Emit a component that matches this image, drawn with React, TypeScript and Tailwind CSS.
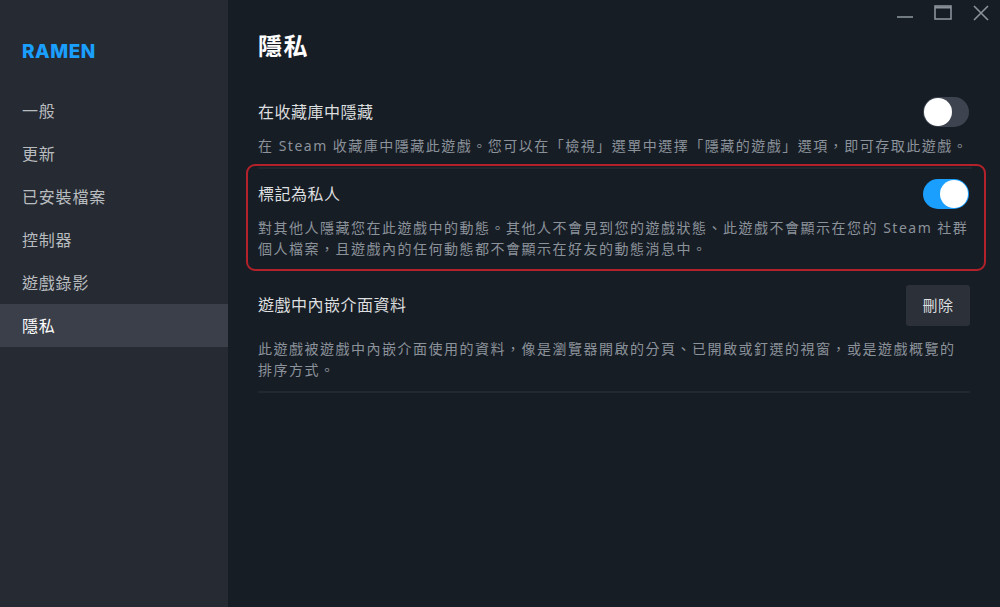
import React from "react";

const cjk = { fontFamily: '"Noto Sans", "Noto Sans CJK TC", sans-serif' };

const navItems = ["一般", "更新", "已安裝檔案", "控制器", "遊戲錄影", "隱私"];

function Toggle({ on }: { on: boolean }) {
    return (
        <div
            className={`w-[46px] h-[30px] rounded-full flex items-center px-[1px] ${
                on ? "bg-[#1a9fff] justify-end" : "bg-[#3d4450] justify-start"
            }`}
        >
            <div className="w-[28px] h-[28px] rounded-full bg-white" />
        </div>
    );
}

function WindowControls() {
    return (
        <div className="flex items-center justify-end gap-[20px] pr-[10px] h-[26px]">
            <svg width="18" height="18" viewBox="0 0 18 18">
                <line x1="1" y1="13" x2="17" y2="13" stroke="#8b929a" strokeWidth="1.6" />
            </svg>
            <svg width="18" height="18" viewBox="0 0 18 18">
                <rect x="1" y="2" width="16" height="13" fill="none" stroke="#8b929a" strokeWidth="1.6" />
                <line x1="1" y1="3.5" x2="17" y2="3.5" stroke="#8b929a" strokeWidth="2" />
            </svg>
            <svg width="18" height="18" viewBox="0 0 18 18">
                <path d="M2 2 L16 16 M16 2 L2 16" stroke="#8b929a" strokeWidth="1.6" />
            </svg>
        </div>
    );
}

export default function App() {
    return (
        <div className="w-[1000px] h-[607px] flex overflow-hidden bg-[#171d25]" style={cjk}>
            <aside className="w-[228px] shrink-0 bg-[#262a33] flex flex-col">
                <div
                    className="pl-[22px] pt-[38px] h-[89px] text-[19px] font-extrabold tracking-[0.5px] text-[#1a9fff]"
                    style={{ fontFamily: 'Inter, "Noto Sans", sans-serif' }}
                >
                    RAMEN
                </div>
                {navItems.map((item) => (
                    <div
                        key={item}
                        className={`h-[43px] flex items-center pl-[22px] text-[16px] tracking-[0.8px] ${
                            item === "隱私" ? "bg-[#3b3f4a] text-white" : "text-[#b8bcbf]"
                        }`}
                    >
                        {item}
                    </div>
                ))}
            </aside>

            <main className="flex-1 flex flex-col">
                <WindowControls />
                <div className="pl-[30px] pr-[28px]">
                    <h1 className="text-[24px] leading-[32px] mt-[4px] font-bold tracking-[1.5px] text-white">
                        隱私
                    </h1>

                    <section className="mt-[25px] pt-[10px] pb-[11px]">
                        <div className="flex items-center justify-between h-[30px]">
                            <span className="text-[16px] tracking-[0.5px] text-[#dcdedf]">在收藏庫中隱藏</span>
                            <div className="mr-[3px]">
                                <Toggle on={false} />
                            </div>
                        </div>
                        <p className="mt-[8px] text-[14px] leading-[21px] tracking-[1.5px] text-[#8b929a]">
                            在 Steam 收藏庫中隱藏此遊戲。您可以在「檢視」選單中選擇「隱藏的遊戲」選項，即可存取此遊戲。
                        </p>
                    </section>

                    <section className="relative border-t-2 border-[#232830] pt-[10px] pb-[16px]">
                        <div className="absolute left-[-12px] right-[-14px] top-[-5px] bottom-[4px] border-2 border-[#b3222a] rounded-[9px] pointer-events-none" />
                        <div className="flex items-center justify-between h-[30px]">
                            <span className="text-[16px] tracking-[0.5px] text-[#dcdedf]">標記為私人</span>
                            <div className="mr-[3px]">
                                <Toggle on={true} />
                            </div>
                        </div>
                        <p className="mt-[8px] text-[14px] leading-[21px] tracking-[1.5px] text-[#8b929a]">
                            對其他人隱藏您在此遊戲中的動態。其他人不會見到您的遊戲狀態、此遊戲不會顯示在您的 Steam 社群個人檔案，且遊戲內的任何動態都不會顯示在好友的動態消息中。
                        </p>
                    </section>

                    <section className="border-b-2 border-[#232830] pt-[10px] pb-[11px] mr-[2px]">
                        <div className="flex items-center justify-between h-[40px]">
                            <span className="text-[16px] tracking-[0.5px] text-[#dcdedf]">遊戲中內嵌介面資料</span>
                            <button className="w-[64px] h-[41px] rounded-[3px] bg-[#2c3039] text-[15px] tracking-[0.5px] text-[#dcdedf]">
                                刪除
                            </button>
                        </div>
                        <p className="mt-[13px] text-[14px] leading-[21px] tracking-[1.5px] text-[#8b929a]">
                            此遊戲被遊戲中內嵌介面使用的資料，像是瀏覽器開啟的分頁、已開啟或釘選的視窗，或是遊戲概覽的排序方式。
                        </p>
                    </section>
                </div>
            </main>
        </div>
    );
}
